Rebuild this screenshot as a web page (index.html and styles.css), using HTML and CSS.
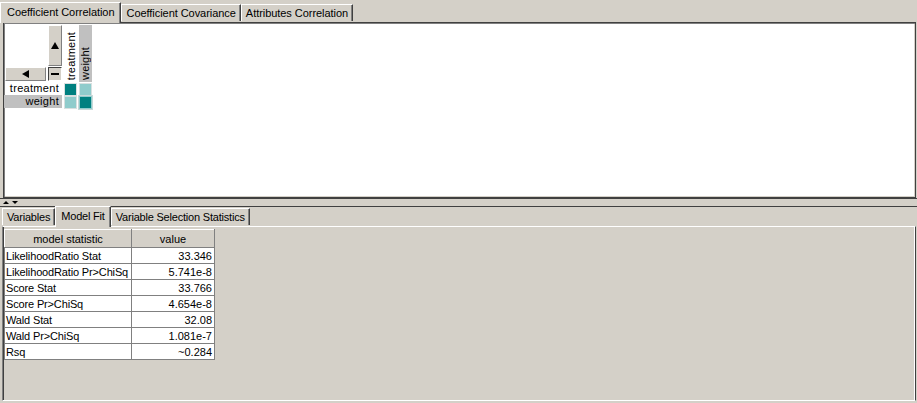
FILE: index.html
```html
<!DOCTYPE html>
<html>
<head>
<meta charset="utf-8">
<link rel="stylesheet" href="styles.css">
</head>
<body>
<div class="app">
  <div class="tabs tabs-top">
    <div class="tab selected">Coefficient Correlation</div>
    <div class="tab">Coefficient Covariance</div>
    <div class="tab">Attributes Correlation</div>
  </div>
  <div class="panel-top">
    <div class="matrix">
      <div class="corner">
        <div class="corner-top">
          <div class="corner-blank"></div>
          <div class="btn btn-up"><span class="arr-up"></span></div>
        </div>
        <div class="corner-bottom">
          <div class="btn btn-left"><span class="arr-left"></span></div>
          <div class="btn btn-minus"><span class="minus"></span></div>
        </div>
      </div>
      <div class="colhead"><span>treatment</span></div>
      <div class="colhead gray"><span>weight</span></div>
      <div class="rowlabel">treatment</div>
      <div class="cellwrap"><div class="cell dark"></div></div>
      <div class="cellwrap"><div class="cell light"></div></div>
      <div class="rowlabel gray">weight</div>
      <div class="cellwrap"><div class="cell light"></div></div>
      <div class="cellwrap"><div class="cell dark sel"></div></div>
    </div>
  </div>
  <div class="divider">
    <span class="d-up"></span><span class="d-down"></span>
  </div>
  <div class="tabs tabs-bottom">
    <div class="tab">Variables</div>
    <div class="tab selected">Model Fit</div>
    <div class="tab">Variable Selection Statistics</div>
  </div>
  <div class="panel-bottom">
    <table class="grid">
      <thead>
        <tr><th class="c1">model statistic</th><th class="c2">value</th></tr>
      </thead>
      <tbody>
        <tr><td>LikelihoodRatio Stat</td><td class="num">33.346</td></tr>
        <tr><td>LikelihoodRatio Pr&gt;ChiSq</td><td class="num">5.741e-8</td></tr>
        <tr><td>Score Stat</td><td class="num">33.766</td></tr>
        <tr><td>Score Pr&gt;ChiSq</td><td class="num">4.654e-8</td></tr>
        <tr><td>Wald Stat</td><td class="num">32.08</td></tr>
        <tr><td>Wald Pr&gt;ChiSq</td><td class="num">1.081e-7</td></tr>
        <tr><td>Rsq</td><td class="num">~0.284</td></tr>
      </tbody>
    </table>
  </div>
</div>
</body>
</html>
```

FILE: styles.css
```css
html, body {
  margin: 0;
  padding: 0;
}
body {
  background: #d4d0c8;
  font-family: "Liberation Sans", Arial, sans-serif;
  font-size: 11px;
  color: #000;
  width: 917px;
  height: 403px;
  overflow: hidden;
}
.app {
  display: flex;
  flex-direction: column;
  height: 403px;
}
.tabs {
  display: flex;
  align-items: flex-end;
  position: relative;
  z-index: 2;
}
.tabs-top {
  height: 22px;
  padding-top: 1px;
  box-sizing: border-box;
}
.tab {
  height: 17px;
  line-height: 16px;
  padding: 0 4px;
  border-top: 1px solid #fff;
  border-left: 1px solid #fff;
  border-right: 1px solid #404040;
  box-shadow: inset -1px 0 #808080;
  box-sizing: border-box;
  margin-bottom: 1px;
  white-space: nowrap;
}
.tab.selected {
  height: 21px;
  line-height: 19px;
  padding: 0 6px;
  margin-bottom: -1px;
  background: #d4d0c8;
}
.tabs-top .tab {
  letter-spacing: -0.05px;
}
.tabs-bottom .tab {
  letter-spacing: -0.2px;
}
.tabs-bottom .tab.selected {
  padding: 0 5px;
}
.panel-top {
  margin: 0 1px 0 3px;
  height: 176px;
  background: #fff;
  border: 1px solid #404040;
  box-shadow: inset 1px 1px #808080, inset -1px -1px #d4d0c8, inset -2px -2px #fff;
  box-sizing: border-box;
  padding: 2px 0 0 0;
  position: relative;
  z-index: 1;
}
.matrix {
  display: grid;
  grid-template-columns: 58px 16px 14px;
  grid-template-rows: 57px 13px 13px;
}
.corner {
  display: flex;
  flex-direction: column;
}
.corner-top {
  display: flex;
  height: 41px;
}
.corner-blank {
  flex: 1;
}
.btn {
  background: #d4d0c8;
  box-sizing: border-box;
  display: flex;
  align-items: center;
  justify-content: center;
  border-top: 1px solid #fff;
  border-left: 1px solid #fff;
  border-right: 1px solid #808080;
  border-bottom: 1px solid #808080;
}
.btn-up {
  width: 14px;
  margin-left: 2px;
  height: 41px;
}
.corner-bottom {
  display: flex;
  height: 14px;
  margin-top: 1px;
  padding-left: 1px;
}
.btn-left {
  width: 41px;
  height: 14px;
}
.btn-minus {
  width: 14px;
  height: 14px;
  margin-left: 2px;
  border-top: 1px solid #404040;
  border-left: 1px solid #404040;
  border-right: 1px solid #fff;
  border-bottom: 1px solid #fff;
}
.arr-up {
  width: 0;
  height: 0;
  border-left: 4px solid transparent;
  border-right: 4px solid transparent;
  border-bottom: 7px solid #000;
}
.arr-left {
  width: 0;
  height: 0;
  border-top: 4px solid transparent;
  border-bottom: 4px solid transparent;
  border-right: 7px solid #000;
}
.minus {
  width: 8px;
  height: 2px;
  background: #000;
}
.colhead {
  display: flex;
  justify-content: center;
  align-items: flex-end;
  margin-left: 2px;
  width: 14px;
  height: 57px;
  padding-bottom: 2px;
  box-sizing: border-box;
}
.colhead span {
  writing-mode: vertical-rl;
  transform: rotate(180deg);
  line-height: 13px;
  letter-spacing: 0.2px;
}
.colhead.gray {
  background: #c0c0c0;
  margin-left: 1px;
  width: 13px;
}
.rowlabel {
  text-align: right;
  padding-right: 3px;
  line-height: 13px;
  height: 13px;
  letter-spacing: 0.3px;
}
.rowlabel.gray {
  background: #c0c0c0;
}
.cellwrap {
  display: flex;
  align-items: center;
  justify-content: center;
  padding-top: 1px;
}
.cell {
  width: 13px;
  height: 13px;
  box-sizing: border-box;
  border: 1px solid #d8e0e0;
}
.cell.dark {
  background: #008080;
}
.cell.light {
  background: #90cccc;
}
.cell.sel {
  border: 1px solid #90cccc;
  outline: 1px solid #c8d8d8;
}
.divider {
  height: 8px;
  display: flex;
  align-items: center;
  gap: 3px;
  padding-left: 3px;
  border-top: 1px solid #404040;
  box-sizing: border-box;
  position: relative;
}
.divider::after {
  content: "";
  position: absolute;
  left: 0;
  right: 0;
  bottom: -1px;
  border-bottom: 1px solid #404040;
}
.d-up {
  width: 0;
  height: 0;
  border-left: 3px solid transparent;
  border-right: 3px solid transparent;
  border-bottom: 3px solid #000;
}
.d-down {
  width: 0;
  height: 0;
  border-left: 3px solid transparent;
  border-right: 3px solid transparent;
  border-top: 3px solid #000;
}
.tabs-bottom {
  height: 20px;
  padding-left: 2px;
  box-sizing: border-box;
}
.panel-bottom {
  flex: 1;
  margin: 0 1px 2px 2px;
  border-left: 1px solid #808080;
  border-top: 1px solid #fff;
  border-right: 1px solid #404040;
  border-bottom: 1px solid #fff;
  box-shadow: inset -1px 0 #fff, inset 1px 0 #404040;
  box-sizing: border-box;
  padding: 2px 0 0 1px;
}
.grid {
  border-collapse: collapse;
  border: 1px solid #808080;
  table-layout: fixed;
  width: 210px;
}
.grid th {
  background: #d4d0c8;
  font-weight: normal;
  height: 18px;
  padding: 0;
  text-align: center;
  border-top: 1px solid #fff;
  border-left: 1px solid #fff;
  border-right: 1px solid #808080;
  border-bottom: 1px solid #808080;
  box-sizing: border-box;
}
.grid .c1 { width: 127px; }
.grid .c2 { width: 83px; }
.grid td {
  background: #fff;
  height: 16px;
  padding: 0 2px 0 1px;
  border: 1px solid #808080;
  box-sizing: border-box;
  white-space: nowrap;
  overflow: hidden;
  line-height: 14px;
  letter-spacing: -0.15px;
}
.grid td.num {
  text-align: right;
  letter-spacing: 0;
}
```
